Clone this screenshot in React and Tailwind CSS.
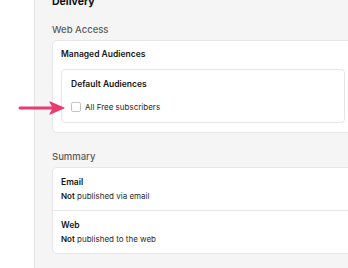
export default function App() {
  return (
    <div className="relative flex h-[268px] w-[348px] overflow-hidden bg-[#f5f5f5] font-['Inter',sans-serif]">
      {/* sidebar strip */}
      <div className="w-[35px] shrink-0 bg-white border-r border-[#e6e6e6]" />

      <div className="flex-1 pl-[17px]">
        <div className="mt-[-6px] flex w-[302px] flex-col">
          <h1 className="text-[10.5px] font-bold leading-[16px] text-[#111]">Delivery</h1>

          {/* Web Access */}
          <div className="mt-[12px] mb-[2px] text-[9.5px] font-medium leading-[16px] text-[#5c5c5c]">
            Web Access
          </div>
          <div className="rounded-[5px] border border-[#e6e6e6] bg-white px-[8px] pt-[6px] pb-[9px]">
            <div className="text-[8.5px] font-semibold leading-[14px] text-[#151515]">Managed Audiences</div>
            <div className="mt-[8px] rounded-[4px] border border-[#e6e6e6] px-[9px] pt-[7px] pb-[8px]">
              <div className="text-[8.5px] font-semibold leading-[14px] text-[#151515]">Default Audiences</div>
              <label className="mt-[9px] flex h-[14px] items-center gap-[4px]">
                <span className="h-[10px] w-[10px] rounded-[2px] border border-[#c4c4c4] bg-white" />
                <span className="text-[8px] leading-[14px] text-[#2a2a2a]">All Free subscribers</span>
              </label>
            </div>
          </div>

          {/* Summary */}
          <div className="mt-[16px] mb-[2px] text-[9.5px] font-medium leading-[16px] text-[#5c5c5c]">
            Summary
          </div>
          <div className="rounded-[5px] border border-[#e6e6e6] bg-white">
            <div className="px-[8px] py-[7px] text-[8px] leading-[14px] text-[#2a2a2a]">
              <div className="text-[8.5px] font-semibold text-[#151515]">Email</div>
              <div><span className="font-semibold text-[#151515]">Not</span> published via email</div>
            </div>
            <div className="border-t border-[#e6e6e6] px-[8px] py-[7px] text-[8px] leading-[14px] text-[#2a2a2a]">
              <div className="text-[8.5px] font-semibold text-[#151515]">Web</div>
              <div><span className="font-semibold text-[#151515]">Not</span> published to the web</div>
            </div>
          </div>
        </div>
      </div>

      {/* annotation arrow */}
      <svg className="absolute left-[17px] top-[101px]" width="50" height="14" viewBox="0 0 50 14">
        <line x1="3" y1="7" x2="38" y2="7" stroke="#ea3a6e" strokeWidth="3" strokeLinecap="round" />
        <path d="M33 1 L47 7 L33 13 L36.5 7 Z" fill="#ea3a6e" stroke="#ea3a6e" strokeWidth="1.2" strokeLinejoin="round" />
      </svg>
    </div>
  );
}
